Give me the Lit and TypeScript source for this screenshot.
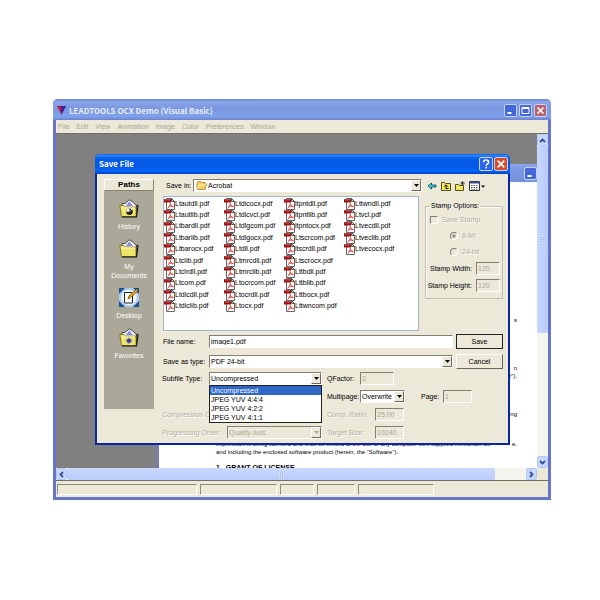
import { LitElement, html, css, svg } from "lit";
import { customElement, state } from "lit/decorators.js";

const FILES = [
  "Ltautdll.pdf", "Ltautlib.pdf", "Ltbardll.pdf", "Ltbarlib.pdf", "Ltbarocx.pdf",
  "Ltclib.pdf", "Ltclrdll.pdf", "Ltcom.pdf", "Ltdicdll.pdf", "Ltdiclib.pdf",
  "Ltdicocx.pdf", "Ltdicvcl.pdf", "Ltdlgcom.pdf", "Ltdlgocx.pdf", "Ltdll.pdf",
  "Ltmrcdll.pdf", "Ltmrclib.pdf", "Ltocrcom.pdf", "Ltocrdll.pdf", "Ltocx.pdf",
  "ltpntdll.pdf", "ltpntlib.pdf", "ltpntocx.pdf", "Ltscrcom.pdf", "ltscrdll.pdf",
  "Ltscrocx.pdf", "Lttbdll.pdf", "Lttblib.pdf", "Lttbocx.pdf", "Lttwncom.pdf",
  "Lttwndll.pdf", "Ltvcl.pdf", "Ltvecdll.pdf", "Ltveclib.pdf", "Ltvecocx.pdf",
];

const MENUS = ["File", "Edit", "View", "Animation", "Image", "Color", "Preferences", "Window"];
const SUBTYPES = ["Uncompressed", "JPEG YUV 4:4:4", "JPEG YUV 4:2:2", "JPEG YUV 4:1:1"];

const pdfIcon = html`<svg class="pdf" viewBox="0 0 11 12" aria-hidden="true">
  <path d="M2.500 .5h5l3 3v8h-8z" fill="#fff" stroke="#666" />
  <path d="M7.500 .5v3h3z" fill="#ddd" stroke="#333" stroke-width=".8" />
  <path d="M0 1.200h7v3.300H0z" fill="#9c1010" />
  <path d="M1 2h5" stroke="#d66" stroke-width=".7" />
  <path d="M3.600 10.300c1.500-1 2.800-3.200 2.700-5M6.300 5.600c.1 2 1.500 3 3.200 3.200M4.600 8.700c1.500-.8 3-.8 4.700-.3" fill="none" stroke="#e03434" stroke-width=".9" />
</svg>`;

const folder = (badge: unknown) => html`<svg class="place" viewBox="0 0 20 19" aria-hidden="true">
  <path d="M3 8V4.500h3L10.500 .8 15 4l2.500 3v9H3z" fill="#fff" stroke="#222" stroke-width=".8" />
  <path d="M6.500 7L10.500 2.200 14 7z" fill="#8d8ee0" />
  <path d="M.8 6.500h4l1.700 1.500H17v9.500H2.500z" fill="#efe56a" stroke="#6a6428" stroke-width=".8" />
  <path d="M17.500 6l1.500 1-1.500 11H3" fill="none" stroke="#111" stroke-width="1.100" />
  <path d="M3 9h13" stroke="#fffbc0" />
  ${badge}
</svg>`;

const historyBadge = svg`<circle cx="10.500" cy="12.800" r="3.300" fill="#222" /><path d="M10.500 12.800V9.500a3.300 3.300 0 0 0-3.300 3.300z" fill="#fff" /><path d="M11.500 11.500l2-2" stroke="#fff" />`;
const favBadge = svg`<path d="M10 9.500v6.500M6.800 12.700h6.400M7.700 10.400l4.600 4.600M12.300 10.400l-4.600 4.600" stroke="#3b35b5" stroke-width=".8" /><circle cx="10" cy="12.700" r="2" fill="#3b35b5" />`;

const desktopIcon = html`<svg class="place" viewBox="0 0 20 19" aria-hidden="true">
  <path d="M0 0h20v19H0z" fill="#1f4f94" />
  <path d="M0 6L6 0h8l6 6v7l-6 6H6l-6-6z" fill="#a9cdf0" />
  <circle cx="10" cy="9.500" r="7.800" fill="#fff" opacity=".8" />
  <path d="M5.500 4.500h7l1 1v9.500h-8z" fill="#fff" stroke="#222" />
  <path d="M9 11l1-3 7.500-7 1.600 1.700-7.600 7z" fill="#f0a818" stroke="#5a3a00" stroke-width=".7" />
</svg>`;

const PLACES = [
  { label: "History", icon: folder(historyBadge) },
  { label: "My Documents", icon: folder(null) },
  { label: "Desktop", icon: desktopIcon },
  { label: "Favorites", icon: folder(favBadge) },
];

const chevron = (d: string) => html`<svg class="chev" viewBox="0 0 7 7" aria-hidden="true">
  <path d=${d} fill="none" stroke="#35508f" stroke-width="1.800" />
</svg>`;

@customElement("app-root")
export class AppRoot extends LitElement {
  @state() private subtype = 0;

  static styles = css`
    :host {
      display: block;
      min-height: 100vh;
      background: #fff;
      padding: 99px 49px 0 53px;
      box-sizing: border-box;
      font: 7px/10px "Liberation Sans", Arial, sans-serif;
      color: #000;
    }
    * { box-sizing: border-box; }
    button, input, select { font: inherit; color: inherit; margin: 0; border-radius: 0; }
    svg { display: block; }
    .app {
      background: #ece9d8;
      border: 3px solid #6674c8;
      border-top: 0;
      border-radius: 5px 5px 0 0;
    }
    .titlebar { display: flex; align-items: center; color: #fff; font: bold 8px/12px "Noto Sans CJK SC", "Liberation Sans", sans-serif; }
    .app > .titlebar {
      height: 21px;
      margin: 0 -3px;
      padding: 2px 4px 0 4px;
      gap: 2px;
      border-radius: 5px 5px 0 0;
      background: linear-gradient(#6f86d8, #8aa4ea 15%, #7b97e0 45%, #7ea1ea 85%, #6a80d0);
      color: #e6ecfc;
    }
    .titlebar h1, .titlebar h2 { font: inherit; margin: 0; flex: 1; white-space: nowrap; }
    .logo { width: 9px; height: 9px; margin-right: 1px; }
    .cap {
      width: 13px;
      height: 13px;
      padding: 0;
      border: 1px solid #c5d2f5;
      border-radius: 2px;
      background: #4468d8;
    }
    .cap svg { width: 11px; height: 11px; }
    .cap.close { background: #b8626c; }
    .menu { display: flex; gap: 7px; height: 13px; padding: 0 2px; color: #aaa798; }
    .menu button { border: 0; background: none; padding: 0; }
    .mdi { display: grid; grid-template-columns: minmax(0, 1fr) 11px; grid-template-rows: auto 12px; border-top: 1px solid #716f64; }
    .workspace { position: relative; background: #808080; overflow: hidden; }
    .doc { position: absolute; top: 30px; left: 101px; right: 0; bottom: 0; background: #fff; border-left: 2px solid #6f7bd0; overflow: hidden; }
    .doc .titlebar { height: 18px; justify-content: flex-end; background: linear-gradient(#8aa4ea, #7b97e0 40%, #7692de); }
    .page { padding: 134px 20px 0 57px; font: 6px/8px "Liberation Sans", sans-serif; color: #000; white-space: nowrap; }
    .page p { margin: 0; }
    .page .tail { text-align: right; }
    .page .split { display: flex; justify-content: space-between; margin-top: 22px; }
    .page .g40 { margin-top: 40px; }
    .page .g30 { margin-top: 30px; }
    .page h3 { margin: 8px 0 0; font: bold 7px/8px "Liberation Sans", sans-serif; }

    .vbar, .hbar { display: flex; background: #f5f5f0; }
    .vbar { flex-direction: column; }
    .sb { border: 1px solid #b4c8f6; background: #c6d6fc; border-radius: 2px; padding: 1px; display: grid; place-items: center; flex: none; }
    .vbar .sb { height: 12px; }
    .hbar .sb { width: 11px; }
    .chev { width: 7px; height: 7px; }
    .vthumb { flex: 0 0 56%; background: linear-gradient(90deg, #c6d6fe, #b9ccfb); border-radius: 2px; display: grid; place-items: center; }
    .hthumb { flex: 0 0 89%; background: linear-gradient(#c9d8fe, #b8cbfa); border-radius: 2px; display: grid; place-items: center; }
    .space { flex: 1; }
    .grip { width: 5px; height: 7px; background: repeating-linear-gradient(#d0ddff 0 1px, #adc0f0 1px 2px); }
    .hbar .grip { background: repeating-linear-gradient(90deg, #d0ddff 0 1px, #adc0f0 1px 2px); }
    .status { display: grid; grid-template-columns: 140fr 77fr 33fr 38fr 76fr 107fr; gap: 3px; border-top: 1px solid #716f64; padding: 3px 4px 2px 1px; }
    .status span { height: 11px; border: 1px solid; border-color: #8c8a7c #fff #fff #8c8a7c; }
    .status span:last-child { border: 0; }

    .dialog {
      position: relative;
      margin: 20px 27px 23px 39px;
      border: 2px solid #0a26a8;
      border-top: 0;
      border-radius: 5px 5px 0 0;
      background: #ece9d8;
    }
    .dialog > .titlebar {
      height: 20px;
      margin: 0 -2px;
      padding: 0 2px 0 4px;
      gap: 1px;
      border-radius: 5px 5px 0 0;
      background: linear-gradient(#0a5ae8, #2f86fb 8%, #0560e8 20%, #0457e2 60%, #0665fb 85%, #0340b8);
    }
    .dialog .cap { width: 14px; height: 14px; background: #2c64e8; }
    .dialog .cap svg { width: 12px; height: 12px; }
    .dialog .cap.close { background: #dc4b28; }
    .content { display: grid; grid-template-columns: 50px minmax(0, 1fr); gap: 8px; padding: 5px 5px 4px 7px; }
    .side { height: 230px; background: #aca899; color: #fff; display: flex; flex-direction: column; align-items: center; }
    .side h3 { align-self: stretch; margin: 0 0 8px; border: 1px solid; border-color: #fff #888577 #888577 #fff; background: #ece9d8; color: #000; font: bold 8px/10px "Liberation Sans", sans-serif; text-align: center; }
    .side button { border: 0; background: none; padding: 0; margin-bottom: 8px; display: flex; flex-direction: column; align-items: center; gap: 4px; line-height: 9px; width: 40px; }
    .place { width: 20px; height: 19px; }
    .row { display: flex; align-items: center; }
    .savein label { flex: none; width: 31px; padding-left: 4px; white-space: nowrap; }
    .savein .combo { flex: 1; }
    .tools { width: 81px; padding-left: 5px; display: flex; align-items: center; gap: 4px; }
    .tools button { border: 0; background: none; padding: 0; }
    .tools svg { width: 10px; height: 10px; }
    .tools .wide svg { width: 16px; }
    .combo { position: relative; height: 13px; display: flex; background: #fff; border: 1px solid; border-color: #808074 #fff #fff #808074; }
    .combo select, .field { border: 0; background: none; padding: 0 1px; outline: 0; }
    .combo select { appearance: none; flex: 1; min-width: 0; width: 100%; height: 11px; }
    .combo .arrow { flex: none; width: 10px; height: 11px; border: 1px solid; border-color: #fff #6b695f #6b695f #fff; background: #ece9d8; display: grid; place-items: center; }
    .arrow svg { width: 5px; height: 3px; }
    .combo.off { background: #ece9d8; }
    .off .arrow path { fill: #aca899; }
    .combo > .fold { width: 11px; height: 11px; margin-left: 2px; }
    .field { width: 100%; min-width: 0; height: 13px; background: #fff; border: 1px solid; border-color: #808074 #fff #fff #808074; }
    .field:disabled { background: #ece9d8; color: #aca899; }
    .combo select:disabled { color: #aca899; opacity: 1; }
    .dim { color: #b0ad9d; text-shadow: 1px 1px #fff; }
    .mid { display: flex; gap: 6px; margin-top: 4px; padding-left: 1px; }
    .files {
      flex: 1;
      margin: 0;
      padding: 1px 0 18px 0;
      list-style: none;
      display: grid;
      grid-auto-flow: column;
      grid-template-rows: repeat(10, 1fr);
      grid-auto-columns: 60px;
      height: 135px;
      border: 1px solid #a5b5c8;
      background: #fff;
    }
    .files li { display: flex; align-items: center; white-space: nowrap; min-height: 0; }
    .pdf { width: 11px; height: 12px; flex: none; }
    .stamp { width: 78px; height: 97px; margin: 6px 0 0; padding: 2px 2px 0 4px; border: 1px solid #c3c0b0; box-shadow: inset 1px 1px #fff; position: relative; min-width: 0; }
    .stamp legend { padding: 0 1px; margin: 0; line-height: 8px; height: 8px; }
    .stamp label { display: flex; align-items: center; gap: 4px; height: 16px; white-space: nowrap; }
    .stamp .opt { padding-left: 20px; }
    .stamp input[type="checkbox"], .stamp input[type="radio"] { appearance: none; width: 8px; height: 8px; background: #ece9d8; border: 1px solid; border-color: #808074 #fff #fff #808074; }
    .stamp input[type="radio"] { border-radius: 50%; }
    .stamp input[type="radio"]:checked { background: radial-gradient(#8c8a7c 0 1px, #ece9d8 2px); }
    .stamp .num { height: 17px; justify-content: flex-end; }
    .stamp .num .field { flex: none; width: 24px; }
    .main-form { display: grid; grid-template-columns: 43px minmax(0, 1fr) 47px; gap: 5px 3px; align-items: center; margin-top: 3px; padding-left: 1px; white-space: nowrap; }
    .btn { height: 15px; border: 1px solid; border-color: #fff #6b695f #6b695f #fff; background: #ece9d8; padding: 0; }
    .btn.default { border-color: #222; }
    .opts { display: grid; grid-template-columns: 160px minmax(0, 1fr); gap: 5px; margin-top: 3px; white-space: nowrap; }
    .opts .row { height: 13px; }
    .opts label { flex: none; }
    .w47 { width: 47px; } .w65 { width: 65px; } .w33 { width: 33px; } .w48 { width: 48px; }
    .opts .combo { flex: 1; }
    .opts .multi { flex: none; width: 45px; }
    .opts .field { width: 29px; }
    .opts .q { width: 34px; }
    .pg { margin-left: 16px; width: 22px; }
    .list { position: absolute; z-index: 1; top: 12px; left: -1px; right: -1px; margin: 0; padding: 0; list-style: none; background: #fff; border: 1px solid #222; }
    .list li { padding: 0 1px; line-height: 9px; height: 9px; }
    .list li[aria-selected="true"] { background: #2f67c4; color: #fff; }
  `;

  private arrow() {
    return html`<span class="arrow"><svg viewBox="0 0 5 3" aria-hidden="true"><path d="M0 0h5L2.500 3z" fill="#000" /></svg></span>`;
  }

  private minGlyph = html`<svg viewBox="0 0 11 11" aria-hidden="true"><path d="M2.500 8h4" stroke="#fff" stroke-width="2" /></svg>`;
  private closeGlyph = html`<svg viewBox="0 0 11 11" aria-hidden="true"><path d="M2.500 2.500l6 6M8.500 2.500l-6 6" stroke="#fff" stroke-width="1.600" /></svg>`;

  render() {
    return html`
      <div class="app">
        <header class="titlebar">
          <svg class="logo" viewBox="0 0 9 9" aria-hidden="true"><path d="M0 0h5L4.500 9z" fill="#c01838" /><path d="M4 0h5L4.500 9z" fill="#3a1fa0" /></svg>
          <h1>LEADTOOLS OCX Demo (Visual Basic)</h1>
          <button class="cap" aria-label="Minimize">${this.minGlyph}</button>
          <button class="cap" aria-label="Maximize"><svg viewBox="0 0 11 11" aria-hidden="true"><path d="M2 2.500h7v6H2zM2 3.500h7" fill="none" stroke="#fff" /></svg></button>
          <button class="cap close" aria-label="Close">${this.closeGlyph}</button>
        </header>
        <nav class="menu">${MENUS.map((m) => html`<button>${m}</button>`)}</nav>
        <div class="mdi">
          <div class="workspace">
            <div class="doc">
              <div class="titlebar"><button class="cap" aria-label="Minimize document">${this.minGlyph}</button></div>
              <div class="page">
                <p class="tail">s</p>
                <p class="tail g40">n</p>
                <p class="tail">r”),</p>
                <p class="tail g30">ng</p>
                <p class="split"><span>expression is being licensed and shall be limited to the use of any computer files supplied hereunder as</span><span>e,</span></p>
                <p>and including the enclosed software product (herein, the “Software”).</p>
                <h3>1. &nbsp;GRANT OF LICENSE</h3>
              </div>
            </div>
            ${this.dialog()}
          </div>
          <div class="vbar">
            <button class="sb" aria-label="Scroll up">${chevron("M1 5l2.500-2.500L6 5")}</button>
            <div class="vthumb"><span class="grip"></span></div>
            <span class="space"></span>
            <button class="sb" aria-label="Scroll down">${chevron("M1 2l2.500 2.500L6 2")}</button>
          </div>
          <div class="hbar">
            <button class="sb" aria-label="Scroll left">${chevron("M5 1L2.500 3.500 5 6")}</button>
            <div class="hthumb"><span class="grip"></span></div>
            <span class="space"></span>
            <button class="sb" aria-label="Scroll right">${chevron("M2 1l2.500 2.500L2 6")}</button>
          </div>
        </div>
        <footer class="status"><span></span><span></span><span></span><span></span><span></span><span></span></footer>
      </div>
    `;
  }

  private dialog() {
    return html`
      <section class="dialog" role="dialog" aria-labelledby="dlg">
        <div class="titlebar">
          <h2 id="dlg">Save File</h2>
          <button class="cap" aria-label="Help"><svg viewBox="0 0 11 11" aria-hidden="true"><path d="M3.300 3.800c0-2.600 4.600-2.600 4.600 0 0 1.600-2.200 1.500-2.200 3.200M5.700 8v1.700" fill="none" stroke="#fff" stroke-width="1.500" /></svg></button>
          <button class="cap close" aria-label="Close">${this.closeGlyph}</button>
        </div>
        <div class="content">
          <aside class="side">
            <h3>Paths</h3>
            ${PLACES.map((p) => html`<button>${p.icon}<span>${p.label}</span></button>`)}
          </aside>
          <div class="main">
            <div class="row savein">
              <label for="in">Save in:</label>
              <div class="combo">
                <svg class="fold" viewBox="0 0 11 11" aria-hidden="true"><path d="M1 9V2.500l1-1h3l1 1h3V4h1.500L9 9.500H1.500z" fill="#f3cf62" stroke="#a77d1c" stroke-width=".8" /><path d="M1.500 9L3 5h7" fill="none" stroke="#fff3b0" /></svg>
                <select id="in"><option>Acrobat</option></select>${this.arrow()}
              </div>
              <div class="tools">
                <button class="back" aria-label="Back"><svg viewBox="0 0 10 10" aria-hidden="true"><path d="M1 5l3.500-3v2H9v2H4.500v2z" fill="#3fd8e0" stroke="#105060" stroke-width=".9" /></svg></button>
                <button aria-label="Up one level"><svg viewBox="0 0 10 10" aria-hidden="true"><path d="M.5 9.500v-8h3l1 1h5v7z" fill="#f2e860" stroke="#55501a" /><path d="M5 8V4M3.300 5.500L5 3.800l1.700 1.700M5 7.500h2.500" fill="none" stroke="#111" /></svg></button>
                <button aria-label="New folder"><svg viewBox="0 0 10 10" aria-hidden="true"><path d="M.5 9.500v-6h3l1 1h4v5z" fill="#f2e860" stroke="#55501a" /><path d="M7.500 0v4.500M5.300 2.200h4.500M6 .8l3 3M9 .8l-3 3" stroke="#222" stroke-width=".7" /></svg></button>
                <button class="wide" aria-label="Views"><svg viewBox="0 0 16 10" aria-hidden="true"><path d="M.5 .5h10v9H.5z" fill="#fff" stroke="#333" /><path d="M.5 1.500h10" stroke="#3a4a90" stroke-width="2" /><path d="M2 4.500h7M2 6.500h7M2 8.200h7" stroke="#555" stroke-dasharray="1.500 1" /><path d="M12 4.500h4l-2 2.200z" /></svg></button>
              </div>
            </div>
            <div class="mid">
              <ul class="files">${FILES.map((f) => html`<li>${pdfIcon}<span>${f}</span></li>`)}</ul>
              <fieldset class="stamp">
                <legend>Stamp Options:</legend>
                <label class="dim"><input type="checkbox" disabled />Save Stamp</label>
                <label class="dim opt"><input type="radio" name="bits" checked disabled />8-bit</label>
                <label class="dim opt"><input type="radio" name="bits" disabled />24-bit</label>
                <label class="num">Stamp Width:<input class="field" value="120" disabled /></label>
                <label class="num">Stamp Height:<input class="field" value="120" disabled /></label>
              </fieldset>
            </div>
            <div class="main-form">
              <label for="fn">File name:</label>
              <input id="fn" class="field" value="image1.pdf" />
              <button class="btn default">Save</button>
              <label for="ty">Save as type:</label>
              <div class="combo"><select id="ty"><option>PDF 24-bit</option></select>${this.arrow()}</div>
              <button class="btn">Cancel</button>
            </div>
            <div class="opts">
              <div class="row">
                <label class="w47" for="sub">Subfile Type:</label>
                <div class="combo">
                  <select id="sub"><option>${SUBTYPES[this.subtype]}</option></select>${this.arrow()}
                  <ul class="list" role="listbox" aria-label="Subfile Type">
                    ${SUBTYPES.map((s, i) => html`<li role="option" aria-selected=${i === this.subtype ? "true" : "false"} @click=${() => (this.subtype = i)}>${s}</li>`)}
                  </ul>
                </div>
              </div>
              <div class="row"><label class="w33" for="qf">QFactor:</label><input id="qf" class="field q" value="2" disabled /></div>
              <div class="row"></div>
              <div class="row">
                <label class="w33" for="mp">Multipage:</label>
                <div class="combo multi"><select id="mp"><option>Overwrite</option></select>${this.arrow()}</div>
                <label class="pg" for="pg">Page:</label><input id="pg" class="field" value="1" disabled />
              </div>
              <div class="row"><span class="dim">Compression Co</span></div>
              <div class="row"><label class="w48 dim" for="cr">Comp. Ratio:</label><input id="cr" class="field" value="25.00" disabled /></div>
              <div class="row">
                <label class="w65 dim" for="po">Progressing Order:</label>
                <div class="combo off"><select id="po" disabled><option>Quality-axis</option></select>${this.arrow()}</div>
              </div>
              <div class="row"><label class="w48 dim" for="ts">Target Size:</label><input id="ts" class="field" value="10240" disabled /></div>
            </div>
          </div>
        </div>
      </section>
    `;
  }
}
